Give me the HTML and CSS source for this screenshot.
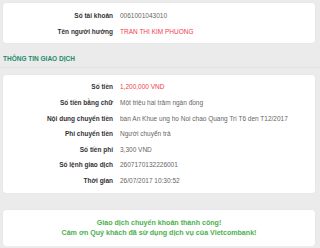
FILE: index.html
```html
<!doctype html>
<html lang="vi">
  <head>
    <meta charset="UTF-8" />
    <title>Thông tin giao dịch</title>
    <link rel="stylesheet" href="styles.css">
  </head>
  <body>
    <div class="page">
      <!-- Người hưởng -->
      <div class="card info first">
        <div class="label">Số tài khoản</div>
        <div class="value">0061001043010</div>
        <div class="label">Tên người hưởng</div>
        <div class="value red">TRAN THI KIM PHUONG</div>
      </div>

      <h3 class="section-title">THÔNG TIN GIAO DỊCH</h3>

      <!-- Chi tiết giao dịch -->
      <div class="card info second">
        <div class="label">Số tiền</div>
        <div class="value red">1,200,000 VND</div>
        <div class="label">Số tiền bằng chữ</div>
        <div class="value">Một triệu hai trăm ngàn đồng</div>
        <div class="label">Nội dung chuyển tiền</div>
        <div class="value">ban An Khue ung ho Noi chao Quang Tri T6 den T12/2017</div>
        <div class="label">Phí chuyển tiền</div>
        <div class="value">Người chuyển trả</div>
        <div class="label">Số tiền phí</div>
        <div class="value">3,300 VND</div>
        <div class="label">Số lệnh giao dịch</div>
        <div class="value">2607170132226001</div>
        <div class="label">Thời gian</div>
        <div class="value">26/07/2017 10:30:52</div>
      </div>

      <div class="card message">
        <p>Giao dịch chuyển khoản thành công!</p>
        <p>Cảm ơn Quý khách đã sử dụng dịch vụ của Vietcombank!</p>
      </div>
    </div>
  </body>
</html>
```

FILE: styles.css
```css
body {
  font-family: "Liberation Sans", Arial, sans-serif;
  margin: 0;
  background-color: #ebebeb;
}
.page {
  padding: 3px 5px 0 3px;
}
.card {
  background-color: #fff;
  border-radius: 3px;
  box-shadow: 0 0 1px rgba(0, 0, 0, 0.12);
}
.info {
  display: grid;
  grid-template-columns: 110px 1fr;
  column-gap: 7px;
  grid-auto-rows: 15.6px;
  align-items: center;
  font-size: 6.5px;
}
.first {
  padding: 5px 0 4px;
}
.second {
  padding: 4px 0 5px;
}
.label {
  text-align: right;
  font-weight: bold;
  color: #333;
}
.value {
  color: #666;
}
.red {
  color: #f0404a;
}
.section-title {
  margin: 12px -5px 7px -3px;
  padding: 0 0 5px 3px;
  font-size: 6.5px;
  color: #1e8a6a;
  border-bottom: 1px solid #e2e2e2;
}
.message {
  margin-top: 17px;
  padding: 8px 0;
  text-align: center;
  color: #4caf50;
  font-weight: bold;
  font-size: 7.1px;
}
.message p {
  margin: 0;
  line-height: 10px;
}
```
